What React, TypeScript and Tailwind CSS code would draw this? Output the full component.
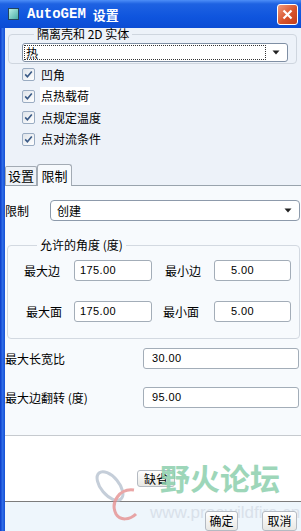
const cjk = "font-['Noto_Sans_CJK_SC',sans-serif]";
const num = "font-['Liberation_Sans',sans-serif] text-[11px] tracking-[0.4px]";

function Arrow() {
  return (
    <svg width="8" height="5" viewBox="0 0 8 5" className="shrink-0">
      <path d="M0.5 0.5 L7.5 0.5 L4 4.5 Z" fill="#222" />
    </svg>
  );
}

function Check({ label, hi }: { label: string; hi?: boolean }) {
  return (
    <div className="flex items-center h-[21.5px] pl-[17px]">
      <div className="w-[13px] h-[13px] border border-[#9aacc2] rounded-[2px] bg-[linear-gradient(135deg,#dfe4ea,#ffffff)] flex items-center justify-center">
        <svg width="9" height="9" viewBox="0 0 9 9">
          <path d="M1.2 4.4 L3.4 6.8 L7.8 1.4" stroke="#3a5a86" strokeWidth="1.6" fill="none" />
        </svg>
      </div>
      <span className={`ml-[5px] px-[1px] leading-[18px] ${hi ? 'bg-white' : ''}`}>{label}</span>
    </div>
  );
}

function Field({ value, className }: { value: string; className: string }) {
  return (
    <div className={`h-[21px] border border-[#a3adb8] rounded-[3px] bg-white flex items-center ${className}`}>
      <span className={num}>{value}</span>
    </div>
  );
}

function Btn({ label, className }: { label: string; className: string }) {
  return (
    <div className={`flex items-center justify-center border border-[#b4bac2] rounded-[3px] bg-[linear-gradient(180deg,#ffffff,#e8e8e4)] ${className}`}>
      {label}
    </div>
  );
}

export default function App() {
  return (
    <div className={`relative w-[301px] h-[531px] overflow-hidden flex flex-col ${cjk} text-[12px] text-black`}>
      {/* title bar */}
      <div className="h-[28px] shrink-0 flex items-center bg-[linear-gradient(180deg,#4d8ef7_0%,#1e62e2_14%,#0f55de_60%,#0b4cd4_100%)]">
        <div className="ml-[8px] w-[11px] h-[12px] border border-[#23445e] bg-[linear-gradient(135deg,#b8efe6,#47ada4)]" />
        <div className="ml-[8px] flex items-center text-white">
          <span className="font-['Liberation_Mono',monospace] font-bold text-[14px] leading-none">AutoGEM</span>
          <span className="ml-[7px] font-bold text-[13px] leading-none">设置</span>
        </div>
        <div className="ml-auto mr-[3px] w-[21px] h-[21px] rounded-[3px] border border-white bg-[linear-gradient(135deg,#f19a7c,#d7532c_55%,#c23d1a)] flex items-center justify-center">
          <svg width="11" height="11" viewBox="0 0 11 11">
            <path d="M1.5 1.5 L9.5 9.5 M9.5 1.5 L1.5 9.5" stroke="white" strokeWidth="2.2" />
          </svg>
        </div>
      </div>

      <div className="flex flex-1 min-h-0">
        <div className="w-[5px] shrink-0 bg-[linear-gradient(90deg,#0a3ac8,#2e6ce6_50%,#1550d6)]" />
        <div className="flex-1 flex flex-col min-w-0">
          {/* top section */}
          <div className="h-[157px] shrink-0 bg-[#edf2f9] flex flex-col">
            <fieldset className="ml-[3px] mr-[4px] border border-[#cfd6df] rounded-[4px] pl-[13px] pr-[8px] pb-[1px]">
              <legend className="ml-[12px] px-[3px] leading-[12px]">隔离壳和 2D 实体</legend>
              <div className="mt-[3px] h-[19px] border border-[#7f8fa4] rounded-[3px] bg-white flex items-center pl-[1px] pr-[7px]">
                <div className="flex-1 h-[15px] border border-dotted border-[#333] flex items-center pl-[1px] leading-none">热</div>
                <div className="ml-[6px]"><Arrow /></div>
              </div>
            </fieldset>
            <Check label="凹角" />
            <Check label="点热载荷" hi />
            <Check label="点规定温度" />
            <Check label="点对流条件" />
            {/* tabs */}
            <div className="mt-auto flex items-end h-[22px]">
              <div className="w-[32px] h-[19px] border border-b-0 border-[#a3abb4] rounded-t-[2px] bg-[#eef2f7] flex items-center justify-center text-[13px]">设置</div>
              <div className="w-[35px] h-[22px] border border-[#a3abb4] border-b-0 rounded-t-[3px] bg-[#f7fafd] flex items-center justify-center text-[13px] mb-[-1px] relative z-10">限制</div>
            </div>
          </div>

          {/* tab panel */}
          <div className="h-[251px] shrink-0 border-t border-b border-t-[#99a3ad] border-b-[#c6cacf] bg-[#f7fafd] flex flex-col">
            <div className="mt-[14px] flex items-center h-[21px]">
              <span className="w-[45px]">限制</span>
              <div className="w-[250px] h-[21px] border border-[#8d9aab] rounded-[4px] bg-white flex items-center pl-[6px] pr-[7px]">
                <span className="flex-1">创建</span>
                <Arrow />
              </div>
            </div>
            <fieldset className="ml-[2px] mr-[1px] mt-[18px] border border-[#d3d9e1] rounded-[4px] pl-[16px] pb-[16px]">
              <legend className="ml-[13px] px-[3px] leading-[12px]">允许的角度 (度)</legend>
              <div className="mt-[9px] flex items-center h-[21px]">
                <span className="w-[50px]">最大边</span>
                <Field value="175.00" className="w-[78px] pl-[5px]" />
                <span className="ml-[13px] w-[49px]">最小边</span>
                <Field value="5.00" className="w-[77px] pl-[16px]" />
              </div>
              <div className="mt-[20px] flex items-center h-[21px]">
                <span className="w-[50px] pl-[2px]">最大面</span>
                <Field value="175.00" className="w-[78px] pl-[5px]" />
                <span className="ml-[11px] w-[51px]">最小面</span>
                <Field value="5.00" className="w-[77px] pl-[16px]" />
              </div>
            </fieldset>
            <div className="mt-[9px] flex items-center h-[21px]">
              <span className="w-[138px]">最大长宽比</span>
              <Field value="30.00" className="w-[156px] pl-[8px]" />
            </div>
            <div className="mt-[18px] flex items-center h-[21px]">
              <span className="w-[138px]">最大边翻转 (度)</span>
              <Field value="95.00" className="w-[156px] pl-[8px]" />
            </div>
          </div>

          {/* defaults area */}
          <div className="h-[66px] shrink-0 bg-white border-b border-[#7c7c7c] pt-[34px] pl-[132px]">
            <Btn label="缺省" className="w-[38px] h-[17px] relative z-10" />
          </div>

          {/* dialog buttons */}
          <div className="flex-1 bg-[#eef6fc] flex items-start pt-[9px] pl-[200px]">
            <Btn label="确定" className="w-[33px] h-[20px] relative z-10" />
            <Btn label="取消" className="ml-[24px] w-[35px] h-[20px] relative z-10" />
          </div>
        </div>
      </div>

      {/* forum watermark */}
      <svg width="60" height="56" viewBox="0 0 60 56" className="absolute left-[90px] top-[468px] opacity-80 z-20 pointer-events-none">
        <ellipse cx="20" cy="18" rx="9" ry="17" transform="rotate(-40 20 18)" fill="none" stroke="#b7c2d0" strokeWidth="3" />
        <path d="M44 22 C30 20 20 34 26 46 C30 53 40 52 46 46" fill="none" stroke="#e69090" strokeWidth="3" />
      </svg>
      <div className="absolute left-[160px] top-[462px] z-20 text-[30px] font-bold leading-none text-[#8dd0ad] opacity-85 pointer-events-none tracking-[0px]">
        野火论坛
      </div>
      <div className="absolute left-[150px] top-[504px] z-0 font-['Liberation_Sans',sans-serif] text-[17px] leading-none text-[#d9e1ea]">
        www.proewildfire.cn
      </div>
    </div>
  );
}
